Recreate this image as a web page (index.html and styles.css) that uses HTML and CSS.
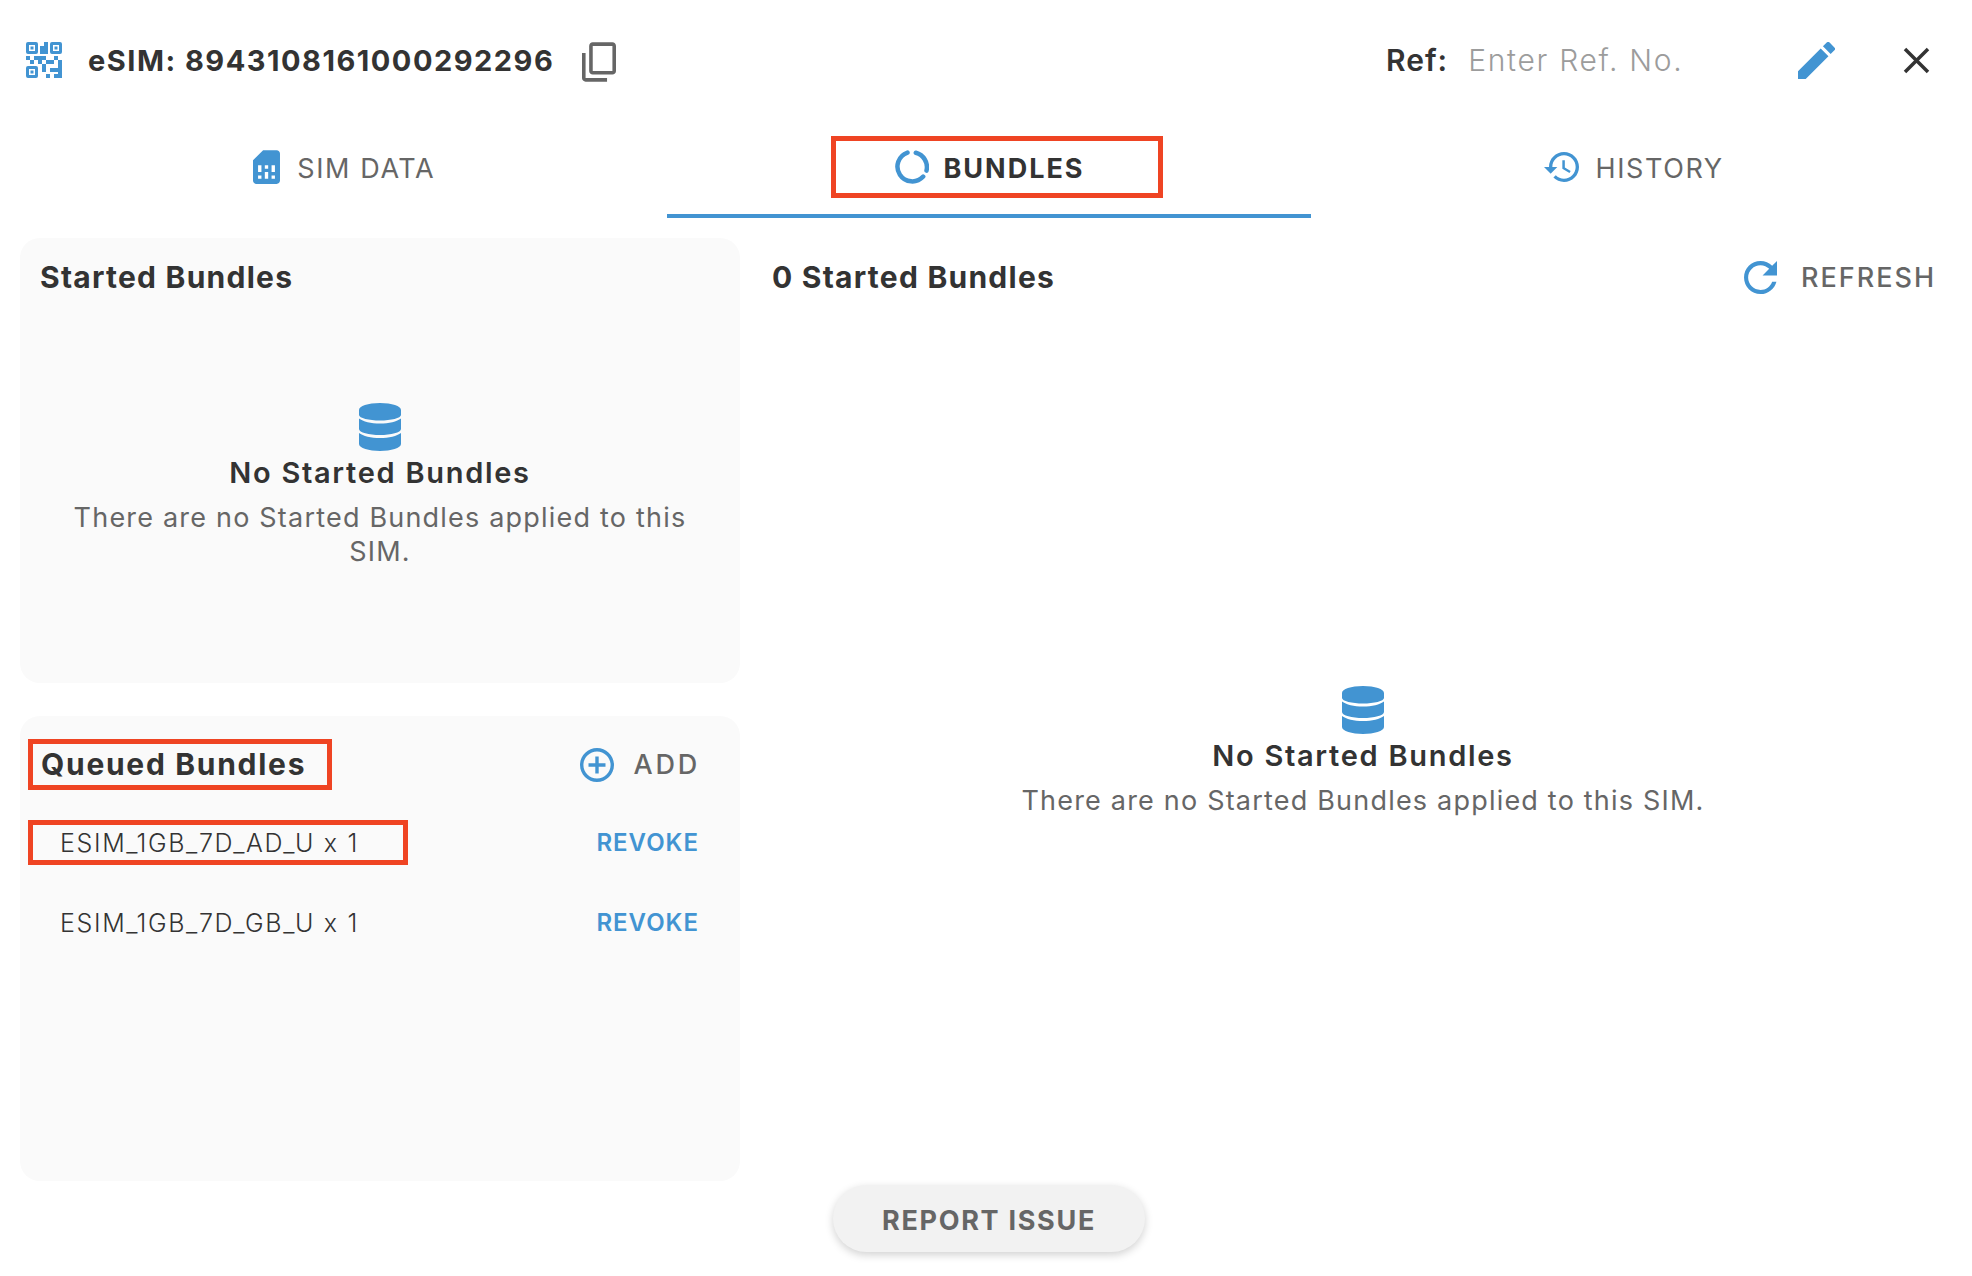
FILE: index.html
```html
<!DOCTYPE html>
<html lang="en">
<head>
<meta charset="utf-8">
<title>eSIM bundles</title>
<link rel="stylesheet" href="styles.css">
</head>
<body>
<header class="header">
  <svg class="qr" viewBox="0 0 36 36"><path fill-rule="evenodd" d="M2 0h8a2 2 0 0 1 2 2v8a2 2 0 0 1-2 2H2a2 2 0 0 1-2-2V2a2 2 0 0 1 2-2zm1 3v6h6V3zM26 0h8a2 2 0 0 1 2 2v8a2 2 0 0 1-2 2h-8a2 2 0 0 1-2-2V2a2 2 0 0 1 2-2zm1 3v6h6V3zM2 24h8a2 2 0 0 1 2 2v8a2 2 0 0 1-2 2H2a2 2 0 0 1-2-2v-8a2 2 0 0 1 2-2zm1 3v6h6v-6z"/><path d="M4.500 4.500h3v3h-3zM28.500 4.500h3v3h-3zM4.500 28.500h3v3h-3zM18 0h4v4h-4zM14 4h8v8h-8zM0 14h4v4H0zM8 14h12v4H8zM28 14h4v4h-4zM4 18h4v4H4zM12 18h4v4h-4zM20 18h8v4h-8zM32 18h4v4h-4zM16 22h4v8h-4zM32 22h4v4h-4zM24 26h8v4h-8zM32 26h4v10h-4zM20 32h4v4h-4zM28 32h4v4h-4z"/></svg>
  <h1 class="title">eSIM: 8943108161000292296</h1>
  <svg class="copy" viewBox="2 1 19 22"><path transform="matrix(1 0 0 -1 0 24)" d="M16 1H4c-1.100 0-2 .9-2 2v14h2V3h12V1zm3 4H8c-1.100 0-2 .9-2 2v14c0 1.100.9 2 2 2h11c1.100 0 2-.9 2-2V7c0-1.100-.9-2-2-2zm0 16H8V7h11v14z"/></svg>
  <div class="ref">
    <span class="ref-label">Ref:</span>
    <span class="ref-hint">Enter Ref. No.</span>
  </div>
  <svg class="pencil" viewBox="3 3 18 18"><path d="M3 17.250V21h3.750L17.810 9.940l-3.750-3.750L3 17.250zM20.710 7.040a1 1 0 0 0 0-1.410l-2.340-2.340a1 1 0 0 0-1.410 0l-1.830 1.830 3.750 3.750 1.830-1.830z"/></svg>
  <svg class="close" viewBox="0 0 27 27"><path d="M2 2l23 23M25 2L2 25"/></svg>
</header>

<nav class="tabs">
  <div class="tab">
    <svg class="ico-sim" viewBox="4 2 16 20"><path d="M19.990 4c0-1.100-.89-2-1.990-2h-8L4 8v12c0 1.100.9 2 2 2h12c1.100 0 2-.9 2-2l-.01-16zM9 19H7v-2h2v2zm8 0h-2v-2h2v2zm-8-4H7v-4h2v4zm4 4h-2v-4h2v4zm0-6h-2v-2h2v2zm4 2h-2v-4h2v4z"/></svg>
    <span class="tab-text">SIM DATA</span>
  </div>
  <div class="tab tab-active">
    <div class="tab-mark">
      <svg class="ico-ring" viewBox="0 0 34 34"><path d="M12.500 2.600A14.800 14.800 0 1 0 28.200 26.600M20.800 2.800A14.800 14.800 0 0 1 31.500 20.600"/></svg>
      <span class="tab-text">BUNDLES</span>
    </div>
  </div>
  <div class="tab">
    <svg class="ico-history" viewBox="1 3 21 18"><path d="M13 3c-4.970 0-9 4.030-9 9H1l3.890 3.890.07.14L9 12H6c0-3.870 3.130-7 7-7s7 3.130 7 7-3.130 7-7 7c-1.930 0-3.680-.79-4.940-2.060l-1.420 1.420C8.270 19.990 10.510 21 13 21c4.970 0 9-4.030 9-9s-4.030-9-9-9zm-1 5v5l4.280 2.540.72-1.210-3.500-2.080V8H12z"/></svg>
    <span class="tab-text">HISTORY</span>
  </div>
</nav>

<main class="main">
  <div class="left">
    <section class="panel panel-started">
      <h2 class="heading panel-head">Started Bundles</h2>
      <div class="empty empty-left">
        <svg class="db" viewBox="0 0 42 48"><path d="M0 7C0 3 9 0 21 0s21 3 21 7v5c0 3-10 5.500-21 5.500S0 15 0 12zM0 15.500c4 3 12 5 21 5s17-2 21-5V26c0 3.500-10 6-21 6S0 29.500 0 26zM0 30c4 3 12 5 21 5s17-2 21-5v11c0 4-10 7-21 7S0 45 0 41z"/></svg>
        <h3 class="empty-title">No Started Bundles</h3>
        <p class="empty-text">There are no Started Bundles applied to this SIM.</p>
      </div>
    </section>
    <section class="panel panel-queued">
      <div class="queued-head">
        <h2 class="heading queued-mark">Queued Bundles</h2>
        <button class="add" type="button">
          <svg class="ico-add" viewBox="2 2 20 20"><path d="M13 7h-2v4H7v2h4v4h2v-4h4v-2h-4V7zm-1-5C6.480 2 2 6.480 2 12s4.480 10 10 10 10-4.480 10-10S17.520 2 12 2zm0 18c-4.410 0-8-3.590-8-8s3.590-8 8-8 8 3.590 8 8-3.590 8-8 8z"/></svg>
          <span class="add-text">ADD</span>
        </button>
      </div>
      <div class="row row-first">
        <span class="bundle bundle-mark">ESIM_1GB_7D_AD_U x 1</span>
        <span class="revoke">REVOKE</span>
      </div>
      <div class="row row-second">
        <span class="bundle">ESIM_1GB_7D_GB_U x 1</span>
        <span class="revoke">REVOKE</span>
      </div>
    </section>
  </div>
  <section class="right">
    <div class="right-head">
      <h2 class="heading">0 Started Bundles</h2>
      <button class="refresh" type="button">
        <svg class="ico-refresh" viewBox="4 4 16 16"><path d="M17.650 6.350C16.200 4.900 14.210 4 12 4c-4.420 0-7.990 3.580-7.990 8s3.570 8 7.990 8c3.730 0 6.840-2.550 7.730-6h-2.080c-.82 2.330-3.040 4-5.650 4-3.310 0-6-2.690-6-6s2.690-6 6-6c1.660 0 3.140.69 4.220 1.780L13 11h7V4l-2.350 2.350z"/></svg>
        <span>REFRESH</span>
      </button>
    </div>
    <div class="empty empty-right">
      <svg class="db" viewBox="0 0 42 48"><path d="M0 7C0 3 9 0 21 0s21 3 21 7v5c0 3-10 5.500-21 5.500S0 15 0 12zM0 15.500c4 3 12 5 21 5s17-2 21-5V26c0 3.500-10 6-21 6S0 29.500 0 26zM0 30c4 3 12 5 21 5s17-2 21-5v11c0 4-10 7-21 7S0 45 0 41z"/></svg>
      <h3 class="empty-title">No Started Bundles</h3>
      <p class="empty-text">There are no Started Bundles applied to this SIM.</p>
    </div>
  </section>
</main>

<footer class="footer">
  <button class="report" type="button">REPORT ISSUE</button>
</footer>
</body>
</html>
```

FILE: styles.css
```css
* { box-sizing: border-box; }
html, body { margin: 0; padding: 0; }
body {
  width: 1972px;
  height: 1276px;
  overflow: hidden;
  background: #fff;
  color: #333;
  font-family: Inter, "Liberation Sans", sans-serif;
}
h1, h2, h3, p { margin: 0; }
svg { display: block; flex: none; fill: #4294d2; }
button {
  font: inherit;
  border: 0;
  background: none;
  padding: 0;
  color: inherit;
}

.header {
  display: flex;
  align-items: center;
  height: 120px;
  padding-left: 26px;
}
.qr { width: 36px; height: 36px; margin-right: 26px; }
.title {
  margin-top: 2px;
  font-size: 29px;
  font-weight: 700;
  line-height: 40px;
  letter-spacing: 1.5px;
  color: #333;
}
.copy { width: 34px; height: 40px; margin: 4px 0 0 28px; fill: #666; }
.ref {
  display: flex;
  align-items: center;
  margin-left: auto;
  width: 412px;
  font-size: 30px;
}
.ref-label { font-weight: 600; letter-spacing: 1px; color: #333; margin-right: 20px; }
.ref-hint { font-weight: 300; letter-spacing: 1.7px; color: #9c9c9c; }
.pencil { width: 37px; height: 37px; margin-right: 68px; }
.close {
  width: 27px;
  height: 27px;
  margin-right: 42px;
  fill: none;
  stroke: #333;
  stroke-width: 3.5;
}

.tabs {
  display: grid;
  grid-template-columns: repeat(3, 1fr);
  height: 98px;
  margin: 0 16px 0 22px;
  font-size: 27px;
  letter-spacing: 1.6px;
  color: #666;
}
.tab {
  display: flex;
  align-items: center;
  justify-content: center;
  gap: 17px;
  height: 98px;
  padding-bottom: 4px;
}
.tab-text { padding-top: 2px; }
.tab-active {
  border-bottom: 4px solid #4294d2;
  padding-bottom: 0;
  color: #333;
  font-weight: 700;
  letter-spacing: 2px;
}
.tab-mark {
  display: flex;
  align-items: center;
  justify-content: center;
  gap: 14px;
  width: 332px;
  height: 62px;
  margin-left: 16px;
  padding-right: 14px;
  border: 5px solid #ef4423;
}
.ico-sim { width: 27px; height: 34px; }
.ico-ring {
  width: 34px;
  height: 34px;
  fill: none;
  stroke: #4294d2;
  stroke-width: 4.500;
  stroke-linecap: round;
}
.ico-history { width: 35px; height: 30px; }

.main {
  display: grid;
  grid-template-columns: 720px 1fr;
  column-gap: 32px;
  margin: 20px 18px 0 20px;
}
.left { display: flex; flex-direction: column; gap: 33px; }
.panel { background: #fafafa; border-radius: 20px; }
.panel-started { height: 445px; }
.panel-queued { height: 465px; }
.heading {
  font-size: 30px;
  font-weight: 700;
  line-height: 38px;
  letter-spacing: 1.25px;
  color: #333;
}
.panel-head { padding: 20px 20px 0; }

.empty {
  display: flex;
  flex-direction: column;
  align-items: center;
  text-align: center;
}
.empty-left { margin-top: 107px; padding: 0 40px; }
.empty-right { margin-top: 390px; }
.db { width: 42px; height: 48px; }
.empty-title {
  margin-top: 4px;
  font-size: 29px;
  font-weight: 600;
  line-height: 36px;
  letter-spacing: 1.7px;
  color: #333;
}
.empty-text {
  margin-top: 10px;
  font-size: 27px;
  font-weight: 400;
  line-height: 34px;
  letter-spacing: 1.2px;
  color: #666;
}

.queued-head {
  display: flex;
  align-items: center;
  justify-content: space-between;
  padding: 23px 40px 0 8px;
}
.queued-mark {
  width: 304px;
  height: 51px;
  padding-left: 8px;
  line-height: 41px;
  letter-spacing: 1.7px;
  border: 5px solid #ef4423;
}
.add, .refresh {
  display: flex;
  align-items: center;
  color: #666;
  font-size: 27px;
  font-weight: 500;
  letter-spacing: 2px;
}
.add { gap: 19px; }
.add-text { letter-spacing: 2.8px; }
.ico-add { width: 34px; height: 34px; }
.row {
  display: flex;
  align-items: center;
  justify-content: space-between;
  height: 45px;
  padding: 0 41px 0 8px;
}
.row-first { margin-top: 30px; }
.row-second { margin-top: 35px; }
.bundle {
  display: flex;
  align-items: center;
  height: 45px;
  padding: 1px 0 0 32px;
  font-size: 25px;
  font-weight: 300;
  letter-spacing: 1.65px;
  color: #333;
}
.bundle-mark {
  width: 380px;
  padding-left: 27px;
  border: 5px solid #ef4423;
}
.revoke { font-size: 24px; font-weight: 600; letter-spacing: 1px; color: #4294d2; }

.right-head {
  display: flex;
  align-items: center;
  justify-content: space-between;
  padding: 20px 18px 0 0;
}
.refresh { gap: 24px; }
.ico-refresh { width: 33px; height: 33px; }

.footer {
  display: flex;
  justify-content: center;
  margin: 4px 16px 0 22px;
}
.report {
  width: 312px;
  height: 67px;
  padding-top: 3px;
  border-radius: 34px;
  background: #f2f2f2;
  box-shadow: 0 3px 8px rgba(0, 0, 0, 0.18);
  color: #666;
  font-size: 27px;
  font-weight: 700;
  letter-spacing: 1.7px;
}
```
